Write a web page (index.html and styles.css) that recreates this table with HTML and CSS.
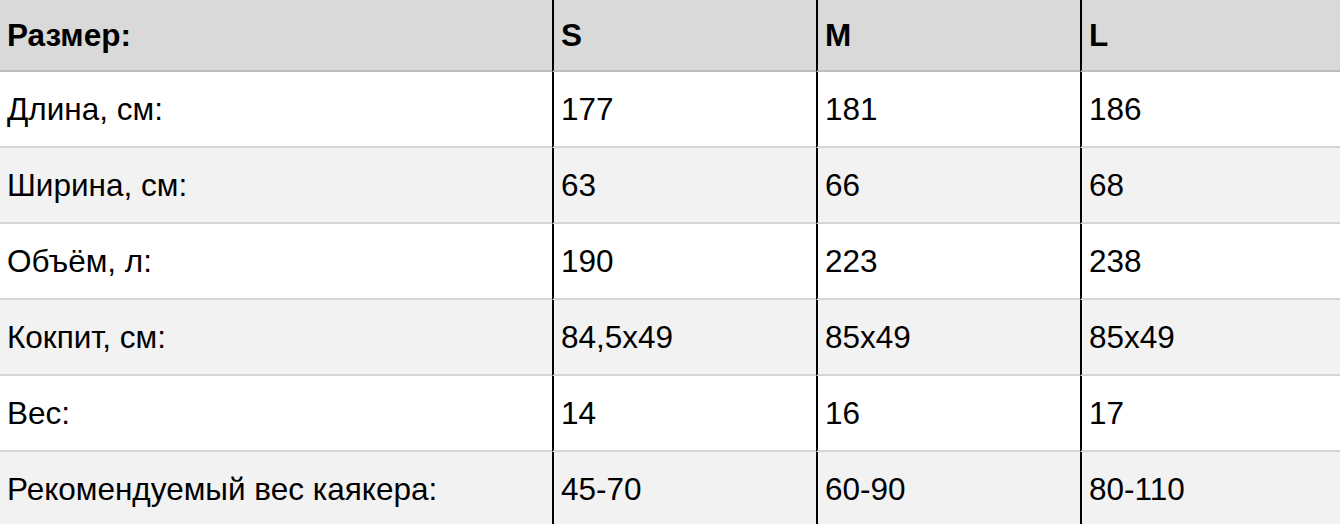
FILE: index.html
```html
<!DOCTYPE html>
<html lang="ru">
<head>
<meta charset="utf-8">
<title>Размеры</title>
<link rel="stylesheet" href="styles.css">
</head>
<body>
<table class="sizes">
  <colgroup>
    <col class="c-label">
    <col class="c-size">
    <col class="c-size">
    <col class="c-last">
  </colgroup>
  <thead>
    <tr class="head">
      <th>Размер:</th><th>S</th><th>M</th><th>L</th>
    </tr>
  </thead>
  <tbody>
    <tr class="odd"><td>Длина, см:</td><td>177</td><td>181</td><td>186</td></tr>
    <tr class="even"><td>Ширина, см:</td><td>63</td><td>66</td><td>68</td></tr>
    <tr class="odd"><td>Объём, л:</td><td>190</td><td>223</td><td>238</td></tr>
    <tr class="even"><td>Кокпит, см:</td><td>84,5x49</td><td>85x49</td><td>85x49</td></tr>
    <tr class="odd"><td>Вес:</td><td>14</td><td>16</td><td>17</td></tr>
    <tr class="even"><td>Рекомендуемый вес каякера:</td><td>45-70</td><td>60-90</td><td>80-110</td></tr>
  </tbody>
</table>
</body>
</html>
```
FILE: styles.css
```css
html, body {
  margin: 0;
  padding: 0;
  background: #ffffff;
}
body {
  font-family: "Liberation Sans", Arial, Helvetica, sans-serif;
  color: #000;
  overflow: hidden;
}
.sizes {
  table-layout: fixed;
  border-collapse: separate;
  border-spacing: 0;
  width: 1340px;
  font-size: 31.5px;
}
.c-label { width: 552px; }
.c-size { width: 264px; }
.c-last { width: 260px; }

.sizes th,
.sizes td {
  padding: 0 0 0 7px;
  text-align: left;
  vertical-align: middle;
  white-space: nowrap;
  border-bottom: 2px solid #d6d6d6;
}
.sizes th + th,
.sizes td + td {
  border-left: 2px solid #000;
}
.head th {
  height: 70px;
  background: #d9d9d9;
  font-weight: bold;
  border-bottom-color: #bdbdbd;
}
.sizes td {
  height: 74px;
}
.odd td { background: #ffffff; }
.even td { background: #f2f2f2; }
```
